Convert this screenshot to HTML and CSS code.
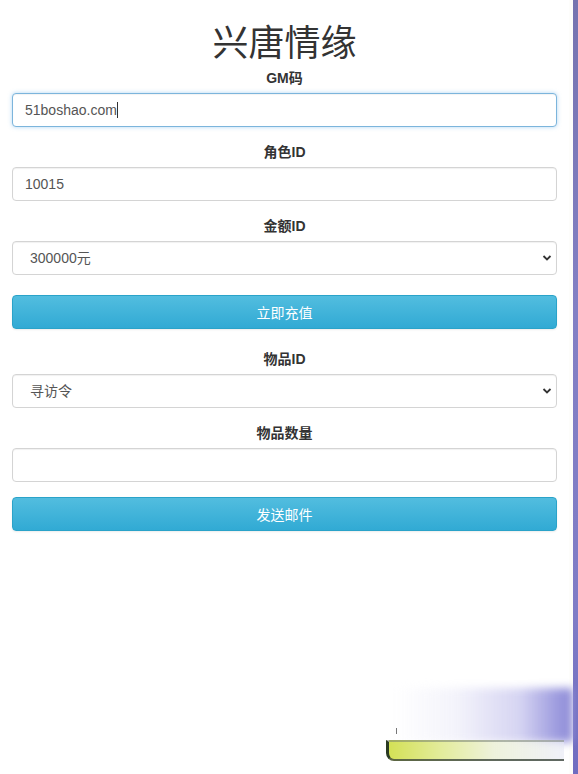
FILE: index.html
```html
<!DOCTYPE html>
<html lang="zh">
<head>
<meta charset="utf-8">
<title>兴唐情缘</title>
<link rel="stylesheet" href="styles.css">
</head>
<body>
<div class="page">
  <main class="content">
    <h1 class="title">兴唐情缘</h1>
    <form class="form">
      <div class="group">
        <label class="label">GM码</label>
        <div class="input focus">51boshao.com<span class="caret"></span></div>
      </div>
      <div class="group">
        <label class="label">角色ID</label>
        <div class="input">10015</div>
      </div>
      <div class="group">
        <label class="label">金额ID</label>
        <div class="input select">300000元
          <svg class="chev" width="10" height="8" viewBox="0 0 10 8"><path d="M1.5 2 L5 5.5 L8.5 2" fill="none" stroke="#333" stroke-width="1.8"/></svg>
        </div>
      </div>
      <div class="btn first">立即充值</div>
    </form>
    <form class="form second">
      <div class="group">
        <label class="label">物品ID</label>
        <div class="input select">寻访令
          <svg class="chev" width="10" height="8" viewBox="0 0 10 8"><path d="M1.5 2 L5 5.5 L8.5 2" fill="none" stroke="#333" stroke-width="1.8"/></svg>
        </div>
      </div>
      <div class="group">
        <label class="label">物品数量</label>
        <div class="input"></div>
      </div>
      <div class="btn">发送邮件</div>
    </form>
  </main>
  <div class="gap"></div>
  <div class="strip"></div>
</div>
<div class="glow"></div>
<div class="bar"></div>
<div class="tick"></div>
</body>
</html>
```

FILE: styles.css
```css
* { box-sizing: border-box; }
html, body { margin: 0; padding: 0; background: #fff; }
body {
  font-family: "Liberation Sans", "Noto Sans CJK SC", sans-serif;
  font-size: 14px;
  color: #333;
  line-height: 20px;
  height: 774px;
  overflow: hidden;
  position: relative;
}
.page { display: flex; height: 774px; }
.content { width: 569px; padding: 0 12px; }
.gap { width: 4px; background: #fdfdfb; }
.strip {
  width: 5px;
  background: linear-gradient(to bottom, #7674b0, #8380c4 40%, #7f7cc6 80%, #6f6cc0);
}
.title {
  margin: 20px 0 8px;
  font-size: 36px;
  line-height: 40px;
  font-weight: 400;
  text-align: center;
  color: #333;
  font-family: "Noto Sans CJK SC", sans-serif;
}
.form { display: flex; flex-direction: column; }
.second { margin-top: 20px; }
.group { display: flex; flex-direction: column; margin-bottom: 15px; }
.label {
  display: block;
  text-align: center;
  font-weight: bold;
  margin-bottom: 5px;
  color: #333;
}
.input {
  position: relative;
  height: 34px;
  padding: 6px 12px;
  border: 1px solid #d4d4d4;
  border-radius: 4px;
  color: #555;
  background: #fff;
  box-shadow: inset 0 1px 1px rgba(0,0,0,.06);
}
.input.focus {
  border-color: #7cb5dc;
  box-shadow: inset 0 1px 1px rgba(0,0,0,.05), 0 0 4px rgba(102,175,233,.5);
}
.select { padding-left: 17px; }
.caret {
  display: inline-block;
  width: 1px;
  height: 16px;
  background: #333;
  vertical-align: -3px;
}
.chev { position: absolute; right: 4px; top: 12px; }
.btn {
  height: 34px;
  line-height: 32px;
  text-align: center;
  color: #fff;
  border: 1px solid #2aa3c9;
  border-radius: 4px;
  background: linear-gradient(to bottom, #52bddf, #31aad4);
  font-family: "Noto Sans CJK SC", sans-serif;
  box-shadow: 0 1px 2px rgba(0,0,0,.08);
}
.btn.first { margin-top: 5px; }
.glow {
  position: absolute;
  left: 395px;
  top: 688px;
  width: 178px;
  height: 54px;
  background: linear-gradient(to right, rgba(255,255,255,0), rgba(235,235,248,.6) 35%, rgba(200,198,238,.75) 70%, rgba(150,148,220,.95) 92%, #8d8ad6);
  filter: blur(4px);
}
.bar {
  position: absolute;
  left: 386px;
  top: 740px;
  width: 178px;
  height: 21px;
  border-left: 3px solid #2a3a22;
  border-top: 2px solid rgba(110,120,110,.5);
  border-bottom: 2px solid rgba(60,70,60,.8);
  border-radius: 0 0 0 8px;
  background: linear-gradient(to right, #d3e156, #e3ec9c 30%, #eef2dc 60%, rgba(230,232,245,.6));
}
.tick {
  position: absolute;
  left: 396px;
  top: 728px;
  width: 1px;
  height: 6px;
  background: #777;
}
```
